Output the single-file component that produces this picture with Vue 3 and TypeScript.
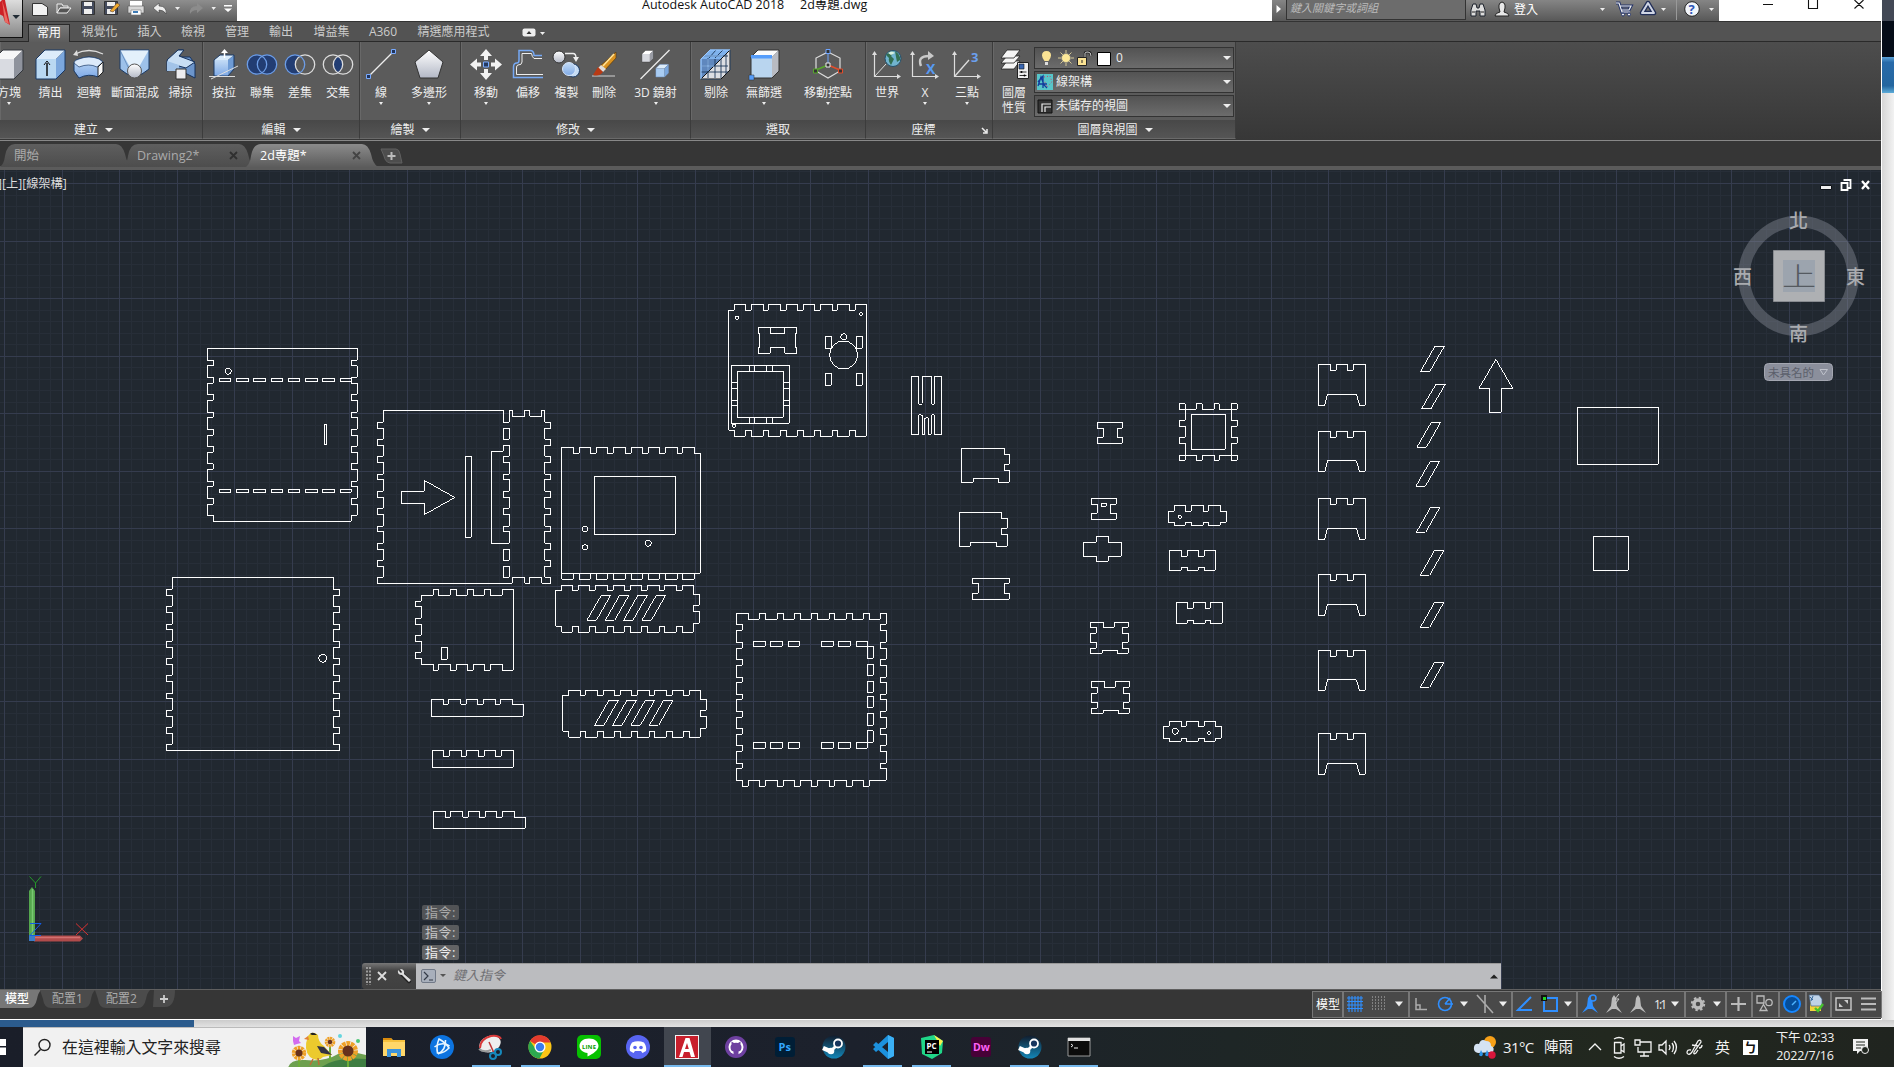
<script setup lang="ts">
interface Tool { label: string; icon: string; w: number; drop?: boolean }
interface Panel { title: string; w: number; pad: number; caret?: boolean; shift?: number; tools: Tool[] }
interface Sheet { x: number; y: number; d: string; circles?: number[][] }

/* ---------- icons ---------- */
const box = (a: string, b: string, c: string, s: string) =>
  `<path d="M1 10L10 1H30L21 10Z" fill="${a}"/><path d="M1 10H21V30H1Z" fill="${b}"/><path d="M21 10L30 1V21L21 30Z" fill="${c}"/><path d="M1 10L10 1H30V21L21 30H1Z" fill="none" stroke="${s}"/>`
const venn = (l: string, m: string, r: string, sl: string, sr: string) =>
  `<circle cx="11" cy="15.500" r="10" fill="${l}"/><circle cx="21" cy="15.500" r="10" fill="${r}"/><path d="M16 6.9A10 10 0 0 1 16 24.1A10 10 0 0 1 16 6.9Z" fill="${m}"/><circle cx="21" cy="15.500" r="9.7" fill="none" stroke="${sr}" stroke-width="1.3"/><circle cx="11" cy="15.500" r="9.7" fill="none" stroke="${sl}" stroke-width="1.3"/>`
const axes = '<path d="M3.500 4V27.500H28" fill="none" stroke="#ddd" stroke-width="1.2"/><path d="M1 6L3.500 2L6 6ZM26 25L30 27.500L26 30Z" fill="#ddd"/>'

const icons: Record<string, string> = {
  cube: box('#f7f7f8', '#d9dbe1', '#8f939d', '#33373d'),
  extrude: box('#dcecfa', '#b9d8f2', '#7ba7dd', '#1b3a66') + '<path d="M12 27V14" stroke="#111" stroke-width="1.5"/><path d="M9 16L12 12L15 16" fill="none" stroke="#111"/>',
  revolve: '<path d="M2 5Q16 -2 30 5" fill="none" stroke="#ddd" stroke-width="1.300"/><path d="M0 6L4 1L5 7Z" fill="#ddd"/><path d="M1 15Q1 11 6 10Q16 6 26 10L30 13V23L25 28Q16 24 6 29L1 22Z" fill="url(#gBlue)" stroke="#1b3a66"/><path d="M1 14Q1 11 6 10Q16 6 26 10L30 13L24 18Q16 14 6 18Z" fill="#dceafa" stroke="#1b3a66" stroke-width=".7"/><path d="M25 18L30 13V23L25 28Z" fill="#f6f6f6" stroke="#222"/>',
  loft: '<path d="M1 1H30V20L23 25H8L1 20Z" fill="#9dc1ea" stroke="#1b3a66"/><path d="M1.500 1.500H29.500L20 18H11Z" fill="#e3f0fb"/><path d="M1.500 2L10 20" stroke="#4e75a8" stroke-width=".6"/><circle cx="15.500" cy="22" r="7" fill="url(#gWhite)" stroke="#555"/>',
  sweep: '<path d="M13 1H18L14 8H25L30 15V29L20 24L12 20L2 22V12Z" fill="#6c95cb" stroke="#15315c"/><path d="M2 11L13 1H19L14 7L30 13L21 19L3 14Z" fill="#c8def4" stroke="#15315c"/><path d="M2 12L14 16V22H2Z" fill="#a2c3e8"/><path d="M11 20H21V30H11Z" fill="#ececef" stroke="#333"/>',
  press: '<path d="M6 11L12 6H26L20 11Z" fill="#d9ebfb"/><path d="M6 11H20V27H6Z" fill="url(#gBlue)"/><path d="M20 11L26 6V20L20 27Z" fill="#6e9bd5"/><path d="M6 11L12 6H26V20L20 27H6Z" fill="none" stroke="#1b3a66"/><path d="M1 27.500H27M3 30L30 17" stroke="#ddd" fill="none"/><path d="M16.500 9V3" stroke="#fff" stroke-width="1.500"/><path d="M13 4L16.500 0L20 4Z" fill="#fff"/>',
  union: venn('#223d73', '#223d73', '#223d73', '#6d9de6', '#6d9de6'),
  subtract: venn('#223d73', '#5b5b5b', '#5b5b5b', '#6d9de6', '#ddd'),
  intersect: venn('#5b5b5b', '#223d73', '#5b5b5b', '#ddd', '#ddd'),
  line: '<path d="M4 27L27 4" stroke="#eee" stroke-width="1.300"/><g fill="#20335a" stroke="#78aaff"><path d="M1.500 25.500h4v4h-4zM26.500 .5h4v4h-4z"/></g>',
  polygon: '<path d="M16 1L30 13L25 29H7L2 13Z" fill="url(#gWhite)" stroke="#333"/>',
  move: '<g fill="#f2f2f2"><path d="M16 0L22 7H18V11H14V7H10Z"/><path d="M16 31L22 24H18V20H14V24H10Z"/><path d="M0 15.500L7 9.500V13.500H11V17.500H7V21.500Z"/><path d="M32 15.500L25 9.500V13.500H21V17.500H25V21.500Z"/></g><path d="M13.500 13h5v5h-5z" fill="#243a62" stroke="#78aaff"/>',
  offset: '<path d="M30 6.500H22Q22 1.500 18 1.500H7V11Q7 14 5 14Q1.500 14 1.500 18V28.500H31" fill="none" stroke="#76a9f5" stroke-width="1.500"/><path d="M30 9.500H22Q20 8 19.500 4.500H10V13Q10 16 6 16Q4.500 16 4.500 19V25.500H31" fill="none" stroke="#eee"/>',
  copy: '<circle cx="8" cy="8" r="6" fill="url(#gWhite)" stroke="#333"/><path d="M14 4.500H22Q25 4.500 25 9" stroke="#eee" fill="none" stroke-width="1.400"/><path d="M22 8H28L25 13Z" fill="#eee"/><circle cx="22" cy="21.500" r="6.500" fill="#c5dcf5" stroke="#1b3a66"/><circle cx="18" cy="20" r="6.500" fill="url(#gBlue)" stroke="#d7e6fa"/>',
  erase: '<path d="M4 27H27" stroke="#aaa" stroke-width="1.500"/><path d="M28 3V9L16 22L11 18Z" fill="#d99221" stroke="#5f3b08" stroke-width=".7"/><path d="M26 5L15 17" stroke="#ffe399" stroke-width="1.500"/><path d="M13 16L18 20L15 23L10 19Z" fill="#ddd"/><path d="M10 18L15 23Q11 28 5 26Z" fill="#b93a14"/>',
  mirror: '<g transform="translate(-1.500 0)"><path d="M2 30L31 1" stroke="#eee" stroke-width="1.200"/><g transform="translate(3 1) scale(.4)">' + box('#fff', '#d7d9df', '#9a9da5', '#333') + '</g><g transform="translate(17 15) scale(.43)">' + box('#dcecfa', '#a9ccf2', '#7ba7dd', '#79a7e6') + '</g></g>',
  cull: box('#7fb2ed', '#5f87bd', '#3c5f92', '#7db2f2') + '<path d="M1 30L30 1V21L21 30Z" fill="#dcdee3" stroke="#111"/><path d="M8 9V29M15 10V29M21 10V29M1 17H28M1 23H28M4 7H28M16 1L9 9M23 1L15 9M26 5V25" fill="none" stroke="#1b3558" stroke-width=".9"/><path d="M1 10L10 1H30M1 10V30M8 10V22M1 17H14M4 7H23" fill="none" stroke="#9ac8ff"/>',
  filter: '<path d="M3 8L10 1H31L24 8Z" fill="#fbfbfb"/><path d="M3 8H24V29H3Z" fill="#b9d5ef"/><path d="M24 8L31 1V22L24 29Z" fill="#b8bbc2"/><path d="M3 8L10 1H31V22L24 29H3Z" fill="none" stroke="#333"/><path d="M3 6H24V9.500H3Z" fill="#559dfb"/><path d="M1 26h5v5H1z" fill="#559dfb" stroke="#333" stroke-width=".5"/>',
  gizmo: '<path d="M16 3L28 9V22L16 29L4 22V9Z" fill="none" stroke="#ddd" stroke-width="1.200"/><path d="M16 15V3" stroke="#6fa5ff"/><path d="M16 16L4 21" stroke="#56a72a" stroke-width="1.500"/><path d="M16 16L28 21" stroke="#e44c2a" stroke-width="1.500"/><g fill="#333"><path stroke="#6fa5ff" d="M14 .5h4v4h-4z"/><path stroke="#eee" d="M14 14h4v4h-4z"/><path stroke="#56a72a" d="M1.500 20h4v4h-4z"/><path stroke="#e44c2a" d="M26.500 20h4v4h-4z"/></g>',
  world: axes + '<path d="M4 27L15 15" stroke="#ddd"/><circle cx="22" cy="9.500" r="8" fill="#71b4cf" stroke="#264f68"/><path d="M15 6Q19 1 23 3L20 7L23 10L20 16Q17 12 18 9ZM24 2Q30 6 29 11L26 13L25 8Z" fill="#326f52"/><path d="M17 4Q21 1 24 4L20 6Z" fill="#d8f1df"/>',
  rotx: axes + '<path d="M12 17Q8 7 20 7" fill="none" stroke="#c9c9c9" stroke-width="2.500"/><path d="M19 2L25 7L19 11Z" fill="#c9c9c9"/><text x="17" y="25" font-size="14" font-weight="bold" fill="#579af3">X</text>',
  threept: axes + '<path d="M4 27L18 11" stroke="#ddd" stroke-width="1.300"/><text x="20" y="13" font-size="13" font-weight="bold" fill="#6ba0ee">3</text>',
  layers: '<g transform="translate(1 0)"><g fill="#f5f5f5" stroke="#222" stroke-width=".8"><path d="M2 20L8 12H21L15 20Z"/><path d="M2 14L8 7H21L15 14Z"/><path d="M2 9L8 1H21L15 9Z"/></g><path d="M18.500 13.500H29.500V29.500H18.500Z" fill="#eee" stroke="#222"/><path d="M20 15H25V20H20Z" fill="#3866b2" stroke="#111" stroke-width=".6"/><path d="M20.500 23H27.500M20.500 26.500H27.500" stroke="#333"/><circle cx="22.500" cy="23" r="1" /><circle cx="25.500" cy="26.500" r="1"/></g>',
}

const panels: Panel[] = [
  { title: '建立', w: 203, pad: 0, caret: true, shift: -15, tools: [
    { label: '方塊', icon: 'cube', w: 42, drop: true }, { label: '擠出', icon: 'extrude', w: 41 }, { label: '迴轉', icon: 'revolve', w: 36 },
    { label: '斷面混成', icon: 'loft', w: 56 }, { label: '掃掠', icon: 'sweep', w: 35 }] },
  { title: '編輯', w: 157, pad: 2, caret: true, tools: [
    { label: '按拉', icon: 'press', w: 38 }, { label: '聯集', icon: 'union', w: 38 }, { label: '差集', icon: 'subtract', w: 38 }, { label: '交集', icon: 'intersect', w: 38 }] },
  { title: '繪製', w: 101, pad: 2, caret: true, tools: [
    { label: '線', icon: 'line', w: 38, drop: true }, { label: '多邊形', icon: 'polygon', w: 58, drop: true }] },
  { title: '修改', w: 230, pad: 5, caret: true, tools: [
    { label: '移動', icon: 'move', w: 40, drop: true }, { label: '偏移', icon: 'offset', w: 44 }, { label: '複製', icon: 'copy', w: 33 },
    { label: '刪除', icon: 'erase', w: 42 }, { label: '3D 鏡射', icon: 'mirror', w: 61, drop: true }] },
  { title: '選取', w: 175, pad: 5, tools: [
    { label: '剔除', icon: 'cull', w: 40 }, { label: '無篩選', icon: 'filter', w: 56, drop: true }, { label: '移動控點', icon: 'gizmo', w: 72, drop: true }] },
  { title: '座標', w: 127, pad: 2, shift: -11, tools: [
    { label: '世界', icon: 'world', w: 38 }, { label: 'X', icon: 'rotx', w: 38, drop: true }, { label: '三點', icon: 'threept', w: 46, drop: true }] },
]

const menuTabs = [
  { t: '常用', w: 42 }, { t: '視覺化', w: 59 }, { t: '插入', w: 41 }, { t: '檢視', w: 46 }, { t: '管理', w: 42 },
  { t: '輸出', w: 46 }, { t: '增益集', w: 55 }, { t: 'A360', w: 48 }, { t: '精選應用程式', w: 93 },
]
const docTabs = [
  { t: '開始', close: false, on: false }, { t: 'Drawing2*', close: true, on: false }, { t: '2d専題*', close: true, on: true },
]

/* ---------- model space: three drawing units per pixel ---------- */
const v = (ys: number[], a: number, b: number) => ys.map((y, i) => `V${y}H${i % 2 ? b : a}`).join('')
const h = (xs: number[], a: number, b: number) => xs.map((x, i) => `H${x}V${i % 2 ? b : a}`).join('')
const rev = (n: number[]) => [...n].reverse()
const rect = (x1: number, y1: number, x2: number, y2: number) => `M${x1} ${y1}H${x2}V${y2}H${x1}Z`
const rowOf = (xs: number[][], y1: number, y2: number) => xs.map(([a, b]) => rect(a, y1, b, y2)).join('')
const slash = (x: number, y: number, hgt = 75) => `M${x} ${y}h28l-43 ${hgt}h-28Z`

const yA = [91, 107, 142, 160, 193, 211, 247, 262, 298, 316, 349, 367, 401, 418, 454, 469, 505, 523, 556]
const slotsA = [[208, 242], [259, 296], [310, 347], [364, 398], [415, 449], [466, 503], [517, 554], [571, 604]]
const yB = [277, 295, 328, 346, 379, 397, 433, 448, 484, 502, 535, 553, 589, 604, 640, 658, 691, 709, 742]
const yC = [88, 106, 139, 157, 193, 208, 244, 262, 295, 313, 346, 364, 401, 415, 451, 469, 502, 520, 553]
const xD = [865, 901, 919, 952, 970, 1003, 1021, 1057]
const xH = [100, 118, 151, 169, 202, 220, 256, 274, 307, 325, 358, 376, 412, 427, 463]
const xI = [97, 115, 148, 166, 202, 220, 253, 271, 304, 322, 358, 373, 409, 427]
const xJ = [121, 136, 172, 190, 223, 241, 274, 292, 328, 343, 379, 397, 430, 448]
const xK = [625, 658, 676, 712, 730, 763, 781, 814, 832, 868, 883, 919, 937, 970, 988, 1021]
const yK = [583, 601, 637, 655, 688, 706, 742, 757, 793, 808, 844, 862, 895, 913, 946, 964, 1000, 1015]
const slotsK = [[640, 676], [691, 727], [745, 778], [844, 880], [895, 931], [949, 982]]
const xL = [136, 154, 190, 205, 241, 259, 292, 310, 343, 361, 397, 412, 448, 466]

const sheets: Sheet[] = [
  { x: 150, y: 330, circles: [[235, 124, 9]], d:
    `M172 55H622${v(yA, 604, 622)}V574H190${v(rev(yA), 172, 190)}Z${rowOf(slotsA, 146, 154)}${rowOf(slotsA, 478, 487)}${rect(523, 283, 529, 344)}` +
    `M700 241H1060V277H1078V241H1087V259H1124V241H1139V259H1175V241H1184${v(yB, 1202, 1184)}V760H1175V742H1139V760H1124V742H1087V760H682${v(rev(yB), 700, 682)}Z` +
    rect(1060, 295, 1078, 328) + rect(1060, 658, 1078, 691) + rect(1060, 709, 1078, 742) +
    `M1060 364V346H1078${v(yB.slice(4, 14), 1060, 1078)}V640H1024V364H1060${rect(946, 379, 964, 622)}M754 484H823V451L914 502L823 553V520H754Z` },
  { x: 150, y: 560, circles: [[518, 295, 12]], d:
    `M67 52H550${v(yC, 569, 550)}V571H49${v(rev(yC), 67, 49)}Z` +
    `M850 106V88${h(xD, 106, 88)}H1090V331${h(rev(xD), 313, 331)}H850V313H814${v([295, 277, 244, 226, 193, 175, 139, 124], 796, 814)}V106H850${rect(874, 262, 892, 298)}` +
    `M844 418${h([880, 895, 932, 949, 982, 1000, 1036, 1051], 433, 418)}H1087V433H1120V469H844Z` +
    `M847 571${h([880, 898, 934, 949, 985, 1003, 1036, 1054], 589, 571)}H1090V622H847Z` +
    `M850 754${h([886, 901, 938, 955, 988, 1006, 1039, 1057], 772, 754)}H1093V772H1126V805H850Z` },
  { x: 540, y: 430, circles: [[135, 297, 8], [135, 352, 8], [325, 340, 9]], d:
    `M65 52${h(xH, 70, 52)}H481V430H65Z${rowOf([[65, 100], [118, 151], [169, 202], [220, 256], [274, 307], [325, 358], [376, 412], [427, 463]], 430, 448)}${rect(163, 139, 406, 313)}` +
    `M65 466${h(xI, 481, 466)}H460V493H478V526H460V544H478V580H460V607${h(rev(xI), 589, 607)}H65V589H47V481H65Z${[183, 238, 293, 348].map(x => slash(x, 496)).join('')}` +
    `M86 781${h(xJ, 796, 781)}H481V808H499V841H481V859H499V895H481V922${h(rev(xJ), 904, 922)}H86V904H67V796H86Z${[206, 260, 315, 370].map(x => slash(x, 811)).join('')}` +
    `M589 550${h(xK, 568, 550)}H1039${v(yK, 1021, 1039)}V1051${h(rev(xK.slice(0, 15)), 1069, 1051)}H607V1051H589${v(rev(yK), 607, 589)}Z` +
    rowOf(slotsK, 634, 649) + rowOf(slotsK, 937, 955) +
    [[649, 685], [703, 736], [754, 787], [799, 832], [850, 886], [902, 937]].map(([a, b]) => rect(982, a, 1000, b)).join('') },
  { x: 700, y: 290, circles: [[111, 83, 5], [483, 72, 5], [102, 407, 5], [431, 140, 9], [431, 195, 42]], d:
    `M103 43${h(xL, 61, 43)}H499V439${h(rev(xL), 421, 439)}H103V421H85V61H103Z` +
    'M175 112H290V130H286V172H290V190H254V172H211V190H175V172H179V130H175ZM211 112V130H254V112' +
    rect(94, 226, 268, 400) + rect(112, 244, 250, 382) + [148, 163, 199, 217].map(x => `M${x} 226V244M${x} 382V400`).join('') +
    [277, 295, 331, 346].map(y => `M94 ${y}H112M250 ${y}H268`).join('') +
    rowOf([[376, 394], [469, 487]], 139, 175) + rowOf([[376, 394], [469, 487]], 250, 286) +
    'M634 259H656V340L660 344L667 340V259H694V340L699 344L703 340V259H725V433H703V376L699 373L694 376V433H685V385L680 382L674 385V433H667V376L660 373L656 376V433H634Z' +
    'M784 475H913V493H928V523H913V541H928V577H895V565H820V577H784ZM778 667H904V685H922V715H904V733H922V769H889V757H811V769H778ZM817 865H928V880H913V910H928V928H817V910H835V880H817Z' },
  { x: 1070, y: 390, circles: [[329, 380, 5], [316, 1024, 9], [417, 1029, 5]], d:
    'M82 97H157V115H142V142H157V160H82V142H100V115H82ZM64 325H139V343H121V370H139V388H64V370H82V343H64ZM94 340H109V349H94Z' +
    'M79 439H115V457H154V499H115V514H79V499H40V457H79Z' +
    'M61 697H100V712H133V697H175V712H157V730H175V757H157V775H175V790H142V781H97V790H61V775H79V757H61V730H79V712H61Z' +
    'M64 874H103V892H136V874H178V892H160V910H178V937H160V955H178V970H145V961H100V970H64V955H82V937H64V910H82V892H64Z' +
    'M346 58H379V40H397V58H433V40H448V58H484V91H502V109H484V142H502V160H484V196H448V211H433V196H397V211H379V196H346V160H328V142H346V109H328V91H346Z' +
    rect(328, 40, 346, 58) + rect(484, 40, 502, 58) + rect(328, 196, 346, 211) + rect(484, 196, 502, 211) + rect(364, 73, 466, 178) +
    'M313 346H346V364H364V346H400V364H415V346H451V364H469V397H451V406H415V397H400V406H364V397H346V406H313V397H295V364H313Z' +
    'M298 481H334V499H352V481H385V499H403V481H436V541H403V532H385V541H352V532H334V541H298Z' +
    'M319 637H352V655H370V637H406V655H421V637H457V700H421V691H406V700H370V691H352V700H319Z' +
    'M298 994H334V1009H349V994H385V1009H403V994H436V1009H454V1045H436V1054H403V1045H385V1054H349V1045H334V1054H298V1045H280V1009H298Z' },
  { x: 1300, y: 330, d:
    [[103, 122], [304, 120], [505, 122], [733, 122], [961, 120], [1210, 122]].map(([y, k]) => `M55 ${y}h36v18h18v-18h33v18h18v-18h36v${k}h-18l-9 -32h-87l-8 32h-19Z`).join('') +
    [[404, 49], [407, 163, 73], [393, 277], [390, 394], [391, 532], [403, 661], [403, 817], [403, 997]].map(([x, y, k]) => slash(x, y, k)).join('') +
    'M587 88L638 175H604V247H568V175H536Z' + rect(832, 232, 1075, 403) + rect(880, 619, 985, 721) },
]

const pitch = 57.58
const gridLines = (start: number, min: number, max: number) => {
  const major: number[] = [], minor: number[] = []
  for (let k = -5; start + (k * pitch) / 5 < max; k++) {
    const p = Math.round(start + (k * pitch) / 5)
    if (p >= min) (k % 5 === 0 ? major : minor).push(p)
  }
  return { major, minor }
}
const gx = gridLines(4, 0, 1881)
const gy = gridLines(183, 170, 989)
const gridPath = (xs: number[], ys: number[]) => xs.map(x => `M${x}.5 170V989`).join('') + ys.map(y => `M0 ${y}.5H1881`).join('')
const minorGrid = gridPath(gx.minor, gy.minor)
const majorGrid = gridPath(gx.major, gy.major)

/* ---------- status bar ---------- */
const man = (x: number, c: string) => `<path d="M${x} 4L${x + 2} 7L${x + 3} 15L${x + 8} 22L${x + 2} 18H${x - 2}L${x - 8} 22L${x - 3} 15L${x - 2} 7Z" fill="${c}"/>`
const car = (x: number) => `<path d="M${x - 4} 10.500h8l-4 5z" fill="#eee"/>`
const status: { w: number; g: string }[] = [
  { w: 31, g: '<text x="4" y="17.500" font-size="12" fill="#fff">模型</text>' },
  { w: 66, g: '<path d="M6 5V21M9 5V21M12 5V21M15 5V21M18 5V21M4 7H20M4 10.500H20M4 14H20M4 17.500H20" stroke="#2f8fff" stroke-width="1.100"/><path d="M29 6H43M29 9H43M29 12H43M29 15H43M29 18H43" stroke="#bbb" stroke-dasharray="1 2"/>' + car(56) },
  { w: 103, g: '<path d="M7 7V18.500H18M7 14H11V18" fill="none" stroke="#aaa" stroke-width="1.500"/><circle cx="36" cy="13" r="6.500" fill="none" stroke="#2f8fff" stroke-width="1.600"/><path d="M36 13H44M36 13L41 7" stroke="#2f8fff" stroke-width="1.500"/>' + car(55) + '<path d="M68 4L84 22M76 4V22" stroke="#aaa" stroke-width="1.600"/>' + car(94) },
  { w: 65, g: '<path d="M19 6L6 19H20" fill="none" stroke="#2f8fff" stroke-width="2"/><path d="M32 7H45V20H32Z" fill="none" stroke="#2f8fff" stroke-width="2"/><path d="M29 4h6v6h-6z" fill="#111"/><path d="M31 6h3v3h-3z" fill="#23d423"/>' + car(56) },
  { w: 108, g: man(13, '#2f8fff') + '<circle cx="16" cy="7" r="3" fill="#4a4a4a" stroke="#2f8fff" stroke-width="1.500"/>' + man(37, '#bbb') + '<path d="M42 3L38 8H42L38 13" fill="none" stroke="#ccc"/>' + man(61, '#bbb') + '<text x="77" y="17.500" font-size="12" fill="#eee" textLength="13">1:1</text>' + car(98) },
  { w: 41, g: '<circle cx="13" cy="13" r="4" fill="none" stroke="#bbb" stroke-width="3.500"/><circle cx="13" cy="13" r="6.200" fill="none" stroke="#bbb" stroke-width="2" stroke-dasharray="2.400 2.470"/>' + car(32) },
  { w: 26, g: '<path d="M12.500 6V20M5 13H20" stroke="#bbb" stroke-width="2.200"/>' },
  { w: 27, g: '<path d="M5 5h7v7H5zM8 19.500h7l-3.500-6z" fill="none" stroke="#bbb" stroke-width="1.300"/><circle cx="17" cy="11.500" r="3.200" fill="none" stroke="#bbb" stroke-width="1.300"/>' },
  { w: 27, g: '<circle cx="13" cy="13" r="8" fill="#064e9a" stroke="#1687ff" stroke-width="2"/><path d="M13 14L17 10" stroke="#4db4ff" stroke-width="1.500"/>' },
  { w: 25, g: '<path d="M4 9H15V20H4Z" fill="#f2d33b"/><path d="M3 4H13L16 8V15H5Z" fill="#bfd3e8" stroke="#486587" stroke-width=".7"/><path d="M4 6L7 9M7 5L5 10" stroke="#37699c"/><path d="M9 17L12 20L17 13" fill="none" stroke="#47c22c" stroke-width="2.400"/>' },
  { w: 51, g: '<path d="M5 7H20V19H5Z" fill="none" stroke="#ccc" stroke-width="1.400"/><path d="M8 16V12L12 16ZM17 9V13L13 9Z" fill="#ccc"/><path d="M30 7.500H45M30 13H45M30 18.500H45" stroke="#bbb" stroke-width="2.200"/>' },
]

/* ---------- taskbar ---------- */
const steam = '<circle cx="14" cy="14" r="11.500" fill="url(#gSteam)"/><path d="M3 15L11 18.500" stroke="#fff" stroke-width="4.500"/><circle cx="11" cy="18" r="3.300" fill="#fff"/><path d="M11 18L18 11" stroke="#fff" stroke-width="3"/><circle cx="18" cy="10.500" r="4" fill="#16365e" stroke="#fff" stroke-width="1.800"/>'
const apps: { g: string; run?: boolean; on?: boolean }[] = [
  { g: '<path d="M3 5H11L13 7H25V23H3Z" fill="#f6c13d"/><path d="M3 5H11L12 7H3Z" fill="#d98a0c"/><path d="M3 9H25V23H3Z" fill="#ffd76a"/><path d="M7 24V16H21V24H17V20H11V24Z" fill="#3c94dc"/>' },
  { g: '<circle cx="14" cy="14" r="12" fill="#0d74e0"/><g fill="none" stroke="#e8f6ff" stroke-width="1.600"><path d="M9.500 20Q8 13 11 6Q17 9 21 15Q15 21 9.500 20Z"/><path d="M6.500 14Q14 8 21.500 13"/><path d="M10 21Q18 17 17.500 7"/></g>' },
  { g: '<ellipse cx="13" cy="11" rx="11" ry="8" fill="#eee" transform="rotate(-20 13 11)"/><path d="M3 15Q3 6 14 3Q22 2 24 6" fill="none" stroke="#d83a3a" stroke-width="2"/><path d="M2 16Q7 20 14 17" stroke="#999" fill="none" stroke-width="2"/><path d="M12 9L17 20" stroke="#b33" stroke-width="1.500"/><circle cx="16" cy="23" r="3" fill="none" stroke="#1688bb" stroke-width="2"/><circle cx="21" cy="19" r="3" fill="none" stroke="#1688bb" stroke-width="2"/>', run: true },
  { g: '<circle cx="14" cy="14" r="11.500" fill="#fbc515"/><path d="M14 14L4 8A11.500 11.500 0 0 1 24.600 9.500H14Z" fill="#e33b2e"/><path d="M4 8A11.500 11.500 0 0 0 13.500 25.500L18 17L9 15Z" fill="#2da94f"/><circle cx="14" cy="14" r="5.500" fill="#fff"/><circle cx="14" cy="14" r="4.200" fill="#3b7ded"/>', run: true },
  { g: '<rect x="2" y="2" width="24" height="24" rx="5" fill="#06c000"/><path d="M14 5.500C8 5.500 4.500 9 4.500 13C4.500 17 8 19.500 12.500 20V23.500C18 21 23.500 17 23.500 13C23.500 9 20 5.500 14 5.500Z" fill="#fff"/><text x="7" y="15.500" font-size="6" font-weight="bold" fill="#06a000" textLength="14">LINE</text>' },
  { g: '<circle cx="14" cy="14" r="12" fill="#5865f2"/><path d="M8 9.500Q14 7 20 9.500Q23 14 22 18L18.500 20L17 18H11L9.500 20L6 18Q5 14 8 9.500Z" fill="#fff"/><circle cx="11" cy="14.500" r="1.800" fill="#5865f2"/><circle cx="17" cy="14.500" r="1.800" fill="#5865f2"/>' },
  { g: '<rect x="2" y="2" width="24" height="24" fill="#f3f3f3"/><path d="M3 3H25V25H3Z" fill="#c81f2c"/><path d="M6 24L12.500 5H16.500L22 24H18L16.500 19H11L9.500 24ZM12 16H15.800L14 10Z" fill="#fff"/>', run: true, on: true },
  { g: '<circle cx="14" cy="14" r="11" fill="#6e40a0"/><circle cx="14" cy="14" r="7.500" fill="#fff"/><path d="M11.500 22V18.500Q8.500 18 8.500 14Q8.500 12.500 9.500 11.500V8.500L12 10Q14 9.500 16 10L18.500 8.500V11.500Q19.500 12.500 19.500 14Q19.500 18 16.500 18.500V22Z" fill="#6e40a0"/>' },
  { g: '<rect x="4" y="4" width="20" height="20" rx="3" fill="#001e36"/><text x="7.500" y="18" font-size="11" font-weight="bold" fill="#31a8ff">Ps</text>' },
  { g: steam },
  { g: '<path d="M19 2L25 5V23L19 26L4 12L7 9L19 19V9L7 19L4 16Z" fill="#1c91dd"/><path d="M19 2L25 5V23L19 26Z" fill="#3bb0f5"/>', run: true },
  { g: '<path d="M3 5L16 2L25 8L24 20L14 26L4 21Z" fill="#20d789"/><path d="M16 2L25 8L22 13Z" fill="#f9f150"/><path d="M7 7H21V21H7Z" fill="#000"/><text x="8.500" y="15.500" font-size="8" font-weight="bold" fill="#fff">PC</text><path d="M9 19H14" stroke="#fff"/>', run: true },
  { g: '<rect x="4" y="4" width="20" height="20" rx="3" fill="#470137"/><text x="6" y="18" font-size="10.500" font-weight="bold" fill="#ff61f6">Dw</text>' },
  { g: steam, run: true },
  { g: '<path d="M3 5H25V23H3Z" fill="#0b0b0b" stroke="#999"/><path d="M3 5H25V8H3Z" fill="#e0e0e0"/><path d="M6 11L8 12.500L6 14M9 15H13" stroke="#eee" fill="none"/>', run: true },
]
</script>

<template>
  <div class="desk">
    <svg class="defs" width="0" height="0">
      <defs>
        <linearGradient id="gBlue" x1="0" y1="0" x2="0" y2="1"><stop offset="0" stop-color="#c4dcf6" /><stop offset="1" stop-color="#7ea9e6" /></linearGradient>
        <linearGradient id="gWhite" x1="0" y1="0" x2="0" y2="1"><stop offset="0" stop-color="#fff" /><stop offset="1" stop-color="#b3b8c6" /></linearGradient>
        <linearGradient id="gSteam" x1="0" y1="0" x2="0" y2="1"><stop offset="0" stop-color="#111d2e" /><stop offset="1" stop-color="#1387b8" /></linearGradient>
        <linearGradient id="gTab" x1="0" y1="0" x2="0" y2="1"><stop offset="0" stop-color="#5e5e5e" /><stop offset="1" stop-color="#4d4d4d" /></linearGradient>
        <linearGradient id="gTabOn" x1="0" y1="0" x2="0" y2="1"><stop offset="0" stop-color="#8b8b8b" /><stop offset="1" stop-color="#5c5c5c" /></linearGradient>
      </defs>
    </svg>

    <div class="upper">
      <div class="window">
        <header class="titlebar">
          <div class="qat">
            <svg width="214" height="21" viewBox="23 0 214 21">
              <path d="M32.500 3.500H42L47.500 7V15.500H32.500Z" fill="#f2f2f2" stroke="#333" />
              <path d="M57 4H62L63 6H68V8H60L57 13Z" fill="#777" stroke="#eee" /><path d="M57 13L60 8H71L67 13Z" fill="#555" stroke="#eee" />
              <path d="M81.500 1.500H94.500V14.500H81.500Z" fill="#444b5d" stroke="#333" /><path d="M84 2H92V6H84ZM84 9H92V14H84Z" fill="#eee" />
              <path d="M104.500 1.500H117.500V14.500H104.500Z" fill="#444b5d" stroke="#333" /><path d="M107 2H115V6H107ZM107 9H115V14H107Z" fill="#eee" /><path d="M110 11L117 3L120 5L113 12Z" fill="#f0aa2e" stroke="#643" stroke-width=".6" />
              <path d="M130 1H142V6H130Z" fill="#fff" /><path d="M128 6H144V13H128Z" fill="#d8d8d8" stroke="#555" stroke-width=".6" /><path d="M131 10H141V15H131Z" fill="#fff" stroke="#777" stroke-width=".6" /><path d="M133 11H138V13H133Z" fill="#3e7bb5" />
              <path d="M153 8L159 3V6Q167 6 166 14Q164 10 159 10V13Z" fill="#eee" stroke="#444" stroke-width=".6" />
              <path d="M175 7H180L177.500 10ZM211.500 7H216L213.500 10Z" fill="#eee" />
              <path d="M203 8L197 3V6Q189 6 190 14Q192 10 197 10V13Z" fill="#8c8c8c" />
              <path d="M224 5H232V6.500H224ZM224 8.500H232L228 12Z" fill="#fff" />
            </svg>
          </div>
          <div class="caption"><span>Autodesk AutoCAD 2018</span><span>2d専題.dwg</span></div>
          <div class="info">
            <svg width="14" height="21"><path d="M4.500 5L9 9L4.500 13Z" fill="#fff" /></svg>
            <div class="ask">鍵入關鍵字或詞組</div>
            <svg width="48" height="21" viewBox="1466 0 48 21">
              <path d="M1471 16V10L1473 4H1476L1477 8H1479L1480 4H1483L1485 10V16H1480V11H1476V16Z" fill="#ddd" stroke="#1d222c" /><path d="M1472 12H1475M1481 12H1484" stroke="#222" />
              <path d="M1495 16Q1495 13 1500 12Q1497 3 1502 2Q1507 3 1504 12Q1509 13 1509 16Z" fill="#e7e7e7" stroke="#222" />
            </svg>
            <span class="login">登入</span>
            <svg width="180" height="21" viewBox="1540 0 180 21">
              <path d="M1600 8h5l-2.500 3z" fill="#eee" />
              <path d="M1616 3H1619L1622 12H1630M1620 6H1631L1629 10H1621" fill="none" stroke="#24346a" stroke-width="3.200" /><path d="M1616 3H1619L1622 12H1630M1620 6H1631L1629 10H1621" fill="none" stroke="#eee" stroke-width="1.200" /><circle cx="1623" cy="14.500" r="1.500" fill="#eee" stroke="#24346a" /><circle cx="1629" cy="14.500" r="1.500" fill="#eee" stroke="#24346a" />
              <path d="M1648 3L1654 13H1642Z" fill="none" stroke="#222f58" stroke-width="4.500" stroke-linejoin="round" /><path d="M1648 3L1654 13H1642Z" fill="none" stroke="#cfd5e5" stroke-width="2" stroke-linejoin="round" />
              <path d="M1661 8h5l-2.500 3z" fill="#eee" /><path d="M1676.500 0V20" stroke="#999" />
              <circle cx="1692" cy="9" r="7.300" fill="#f2f5fa" stroke="#222" /><text x="1688.500" y="14" font-size="13" font-weight="bold" fill="#2c54b6">?</text>
              <path d="M1709 8h5l-2.500 3z" fill="#eee" />
            </svg>
          </div>
          <svg class="winbtns" width="162" height="21" viewBox="1719 0 162 21"><path d="M1763 4.500H1773M1808.500 -2V8.500H1817.500V-2M1854.500 0L1863.500 8.500M1863.500 0L1854.500 8.500" fill="none" stroke="#111" stroke-width="1.100" /></svg>
        </header>

        <div class="appmenu">
          <svg width="22" height="37"><path d="M-1 14V3L2 0H5L10 25L5 22L3 16Z" fill="#cc2027" /><path d="M2 0L9 24L5 22Z" fill="#e96a62" /><path d="M12.500 15H20L16 19Z" fill="#222c35" /></svg>
        </div>

        <nav class="menutabs">
          <span v-for="(m, i) in menuTabs" :key="m.t" :class="{ on: i === 0 }" :style="{ width: m.w + 'px' }">{{ m.t }}</span>
          <svg width="52" height="20"><rect x="22.500" y="6.500" width="13" height="8" rx="2" fill="#eee" /><path d="M26.500 12L29 9L31.500 12Z" fill="#333" /><path d="M40 10H45L42.500 13Z" fill="#eee" /></svg>
        </nav>

        <section class="ribbon">
          <div v-for="p in panels" :key="p.title" class="panel" :style="{ width: p.w + 'px' }">
            <div class="tools" :style="{ paddingLeft: p.pad + 'px' }">
              <div v-for="t in p.tools" :key="t.label" class="tool" :style="{ width: t.w + 'px' }">
                <svg width="32" height="32" viewBox="0 0 32 32" v-html="icons[t.icon]"></svg>
                <span class="lbl">{{ t.label }}</span>
                <i v-if="t.drop" class="tri"></i>
              </div>
            </div>
            <div class="ptitle"><span :style="{ marginLeft: (p.shift ?? 0) + 'px' }">{{ p.title }}</span><i v-if="p.caret" class="tri big"></i><svg v-if="p.title === '座標'" class="launch" width="8" height="8"><path d="M1 1L5 5M6 2V6H2" fill="none" stroke="#eee" stroke-width="1.500" /></svg></div>
          </div>
          <div class="panel layer">
            <div class="tools">
              <div class="tool two"><svg width="32" height="32" viewBox="0 0 32 32" v-html="icons.layers"></svg><span class="lbl">圖層<br>性質</span></div>
              <div class="combos">
                <div class="combo">
                  <svg width="80" height="20" viewBox="0 0 80 20">
                    <path d="M11.500 3Q16 3 16 7.500Q16 10 13.500 13H9.500Q7 10 7 7.500Q7 3 11.500 3Z" fill="#fbe394" /><path d="M10 14H13V17H10Z" fill="#ddd" />
                    <g stroke="#d4c795"><path d="M31 2V18M23 10H39M25.500 4.500L36.500 15.500M36.500 4.500L25.500 15.500" /></g><circle cx="31" cy="10" r="4.500" fill="#fde998" stroke="#777" stroke-width=".7" />
                    <path d="M42.500 9.500H51.500V17.500H42.500Z" fill="#fbe394" stroke="#222" /><path d="M50 9V5Q50 4 53 4Q56 4 56 8" fill="none" stroke="#222" stroke-width="2.500" /><path d="M50 9V5Q50 4 53 4Q56 4 56 8" fill="none" stroke="#ccc" /><path d="M47 12V15" stroke="#222" />
                    <path d="M62.500 4.500H75.500V17.500H62.500Z" fill="#fff" stroke="#000" />
                  </svg><span class="zero">0</span><i class="tri big"></i>
                </div>
                <div class="combo">
                  <svg width="21" height="20"><path d="M2 2H18V18H2Z" fill="#57c5c9" /><path d="M3 14L6 5L9 13L12 16M3 10L8 4L8 16M4 12H12" fill="none" stroke="#123b9b" stroke-width="1.300" /><path d="M9 5L15 4L17 10L12 15L9 8" fill="none" stroke="#c5436b" stroke-dasharray="1 2" /></svg><span>線架構</span><i class="tri big"></i>
                </div>
                <div class="combo">
                  <svg width="21" height="20"><path d="M3 4H17V17H3Z" fill="#333" stroke="#111" /><path d="M7 16V8H16M10 16V11H16" fill="none" stroke="#eee" stroke-width="1.200" /></svg><span>未儲存的視圖</span><i class="tri big"></i>
                </div>
              </div>
            </div>
            <div class="ptitle"><span class="ltitle">圖層與視圖</span><i class="tri big"></i></div>
          </div>
        </section>

        <nav class="doctabs">
          <div v-for="d in docTabs" :key="d.t" class="doctab" :class="{ on: d.on }">
            <svg class="shape" width="132" height="23"><path d="M0 23Q4 20 5 12Q7 0 15 0H116Q122 0 125 10Q127 20 132 23Z" :fill="d.on ? 'url(#gTabOn)' : 'url(#gTab)'" /></svg>
            <span>{{ d.t }}</span>
            <svg v-if="d.close" class="x" width="9" height="9"><path d="M1 1L8 8M8 1L1 8" :stroke="d.on ? '#444' : '#303030'" stroke-width="1.800" /></svg>
          </div>
          <svg class="plus" width="24" height="16"><path d="M1 1H16Q19 1 20 6L22 15H10Q5 14 4 8Z" fill="#4d4d4d" stroke="#606060" /><path d="M11.500 4V12M7.500 8H15.500" stroke="#bbb" stroke-width="2" /></svg>
        </nav>

        <main class="canvas">
          <svg class="model" width="1881" height="820" viewBox="0 170 1881 820">
            <g fill="none" shape-rendering="crispEdges">
              <path :d="minorGrid" stroke="#272e38" />
              <path :d="majorGrid" stroke="#353c4e" />
              <g v-for="(s, i) in sheets" :key="i" :transform="`translate(${s.x} ${s.y}) scale(.333333)`" stroke="#fff" stroke-width="3">
                <path :d="s.d" transform="translate(.5 .5)" />
                <circle v-for="(c, k) in s.circles" :key="k" :cx="c[0]" :cy="c[1]" :r="c[2]" />
              </g>
            </g>
            <g fill="none">
              <path d="M29 937V891L32 887L35 891V937Z" fill="#55a74e" /><path d="M32.500 889V936" stroke="#7ac873" stroke-width="1.500" />
              <path d="M34 935.500H80L83 938.500L80 941.500H34Z" fill="#b04b4b" /><path d="M35 937.500H80" stroke="#d27070" stroke-width="1.500" />
              <path d="M29 935h6v6h-6z" fill="#3b7cc8" />
              <path d="M29.500 876.500L35.500 883L41 876.500M35.500 883V888" stroke="#25982a" /><path d="M76 923.500L88 935M88 923.500L76 935" stroke="#d83232" /><path d="M30 923.500H41L30 935.500H41" stroke="#145ee8" />
              <circle cx="1798.500" cy="276" r="54.500" stroke="#8b909b" stroke-opacity=".42" stroke-width="11.500" />
              <path d="M1773.500 250.500H1824.500V301.500H1773.500Z" fill="#aeb0b3" stroke="#888b90" /><path d="M1783 260H1815V292H1783Z" fill="#9ca4ae" />
            </g>
            <g class="compass" text-anchor="middle">
              <text x="1798.500" y="227.500">北</text><text x="1798.500" y="341">南</text><text x="1742.500" y="284">西</text><text x="1855.500" y="284">東</text>
              <text class="top" transform="translate(1799 285.500) scale(1.18 .92)">上</text>
            </g>
            <rect x="1764.500" y="363.500" width="68" height="17" rx="4" fill="#8b8f9c" stroke="#a4a7b1" />
            <text x="1768" y="376.500" font-size="11.500" fill="#5b5f6b">未具名的</text><path d="M1820 369.500H1827.500L1823.500 375Z" fill="none" stroke="#c0c3cc" />
            <g stroke="#0e1218" stroke-width="1"><path d="M1820.500 185.500H1831.500V189.500H1820.500Z" fill="#eee" /><path d="M1843.500 180H1850.500V188H1848M1841.500 183H1847.500V190H1841.500Z" fill="none" stroke="#fff" stroke-width="1.800" /><path d="M1862 181L1869 189M1869 181L1862 189" stroke="#fff" stroke-width="2.300" /></g>
          </svg>
          <div class="vplabel">][上][線架構]</div>
          <div class="cmd">
            <div class="hist"><span>指令:</span><span>指令:</span><span>指令:</span></div>
            <div class="bar">
              <svg width="54" height="26"><path d="M5 4V22M8 4V22" stroke="#999" stroke-width="2" stroke-dasharray="2 1.500" /><path d="M16 9L24 17M24 9L16 17" stroke="#ddd" stroke-width="1.800" /><path d="M39 10L47 18" stroke="#222" stroke-width="4.500" stroke-linecap="round" /><path d="M36 7Q35 12 40 12L47 19L49 17L42 11Q43 6 38 6L40 9L39 10Z" fill="#ddd" /></svg>
              <div class="entry">
                <svg width="37" height="26"><rect x="5.500" y="5.500" width="14" height="13" rx="1.500" fill="#a8afbb" stroke="#717987" /><path d="M8 8L12 12L8 16M13 16H17" fill="none" stroke="#333b47" stroke-width="1.200" /><path d="M24 10H30L27 13Z" fill="#555" /></svg>
                <span>鍵入指令</span>
                <svg class="up" width="12" height="26"><path d="M1 14.500H9L5 10.500Z" fill="#222" /></svg>
              </div>
            </div>
          </div>
        </main>

        <footer class="status">
          <div class="layouts">
            <svg width="180" height="20"><path d="M0 0H41Q38 3 37 9Q35 18 29 18H0Z" fill="#777" /><path d="M40 0H95Q92 3 91 9Q90 18 83 18H51Q44 18 43 9Z" fill="#4b4b4b" /><path d="M95 0H150Q147 3 146 9Q144 18 138 18H106Q99 18 98 9Z" fill="#4b4b4b" /><path d="M154 0H175Q175 17 165 17H153Z" fill="#4b4b4b" /><path d="M164 5V13M160 9H168" stroke="#ccc" stroke-width="1.800" /></svg>
            <div class="names"><b>模型</b><span>配置1</span><span>配置2</span></div>
          </div>
          <div class="groups">
            <div v-for="(s, i) in status" :key="i" class="grp" :style="{ width: s.w + 'px' }"><svg :width="s.w" height="26" :viewBox="`0 0 ${s.w} 26`" v-html="s.g"></svg></div>
          </div>
        </footer>
      </div>
      <aside class="behind"><div class="b1"></div><div class="b2"></div><div class="b3"></div><div class="b4"></div></aside>
    </div>
    <div class="strip"><div></div></div>

    <footer class="taskbar">
      <svg class="start" width="23" height="40"><path d="M0 12H6V19H0ZM0 20.500H6V28H0Z" fill="#fff" /></svg>
      <div class="search">
        <svg width="39" height="40"><circle cx="21.500" cy="17" r="5.500" fill="none" stroke="#222" stroke-width="1.400" /><path d="M17.500 21.500L11.500 27.500" stroke="#222" stroke-width="1.500" /></svg>
        <span>在這裡輸入文字來搜尋</span>
        <svg class="bird" width="78" height="40" viewBox="288 1027 78 40">
          <path d="M288 1067Q290 1058 305 1059Q325 1061 338 1053Q350 1049 366 1054V1067Z" fill="#6da04f" /><path d="M320 1067Q335 1055 366 1058V1067Z" fill="#3f7e42" />
          <path d="M299 1053V1066M330 1045V1060M348 1054V1067" stroke="#6cad39" stroke-width="2" />
          <g fill="none" stroke="#efa128"><circle cx="299" cy="1052" r="5" stroke-width="4.500" stroke-dasharray="2.500 .6" /><circle cx="330" cy="1041" r="3.800" stroke-width="3" stroke-dasharray="2 .5" /><circle cx="348" cy="1050" r="7.500" stroke-width="5" stroke-dasharray="3.500 .7" /></g>
          <g fill="#66311d"><circle cx="299" cy="1052" r="3.500" /><circle cx="330" cy="1041" r="2.300" /><circle cx="348" cy="1050" r="5.500" /></g>
          <path d="M308 1035Q312 1029 318 1034Q318 1041 324 1045L332 1054L323 1056Q318 1062 310 1056Q303 1049 308 1035Z" fill="#ecca2d" /><path d="M310 1033Q313 1030 317 1034L312 1034Z" fill="#222" /><path d="M317 1045L324 1046L332 1054L321 1052Z" fill="#333242" /><path d="M308 1035L304 1038L309 1039Z" fill="#e2823a" /><path d="M313 1058L310 1064M318 1057L319 1064" stroke="#bd6d36" stroke-width="1.500" />
          <path d="M293 1035L296 1037L300 1035L299 1040L301 1042L297 1043L294 1044L293 1040Z" fill="#d36cef" /><circle cx="340" cy="1035" r="2" fill="#65d5de" /><circle cx="358" cy="1040" r="2" fill="#4dc778" />
        </svg>
      </div>
      <div class="apps">
        <div v-for="(a, i) in apps" :key="i" class="app" :class="{ run: a.run, on: a.on }"><svg width="28" height="28" viewBox="0 0 28 28" v-html="a.g"></svg></div>
      </div>
      <div class="tray">
        <svg width="26" height="40"><circle cx="17" cy="15" r="6" fill="#f6a018" /><path d="M5 26Q0 25 1 20Q2 16 6 17Q8 11 13 14Q18 14 18 19Q22 20 20 25Z" fill="#d5e3f3" /><path d="M8 23L10 27Q9 31 6 28ZM14 23L16 27Q15 31 12 28Z" fill="#2b93e8" /><circle cx="19" cy="28" r="3.700" fill="#d9163c" /></svg>
        <span class="temp">31°C</span><span class="wx">陣雨</span>
        <svg class="tri-icons" width="130" height="40" viewBox="1577 0 130 40" fill="none" stroke="#f4f4f4" stroke-width="1.300">
          <path d="M1588 23L1594 17L1600 23" /><path d="M1613.500 15.500H1620V26H1613.500ZM1620 19L1623 17V25L1620 23M1613 12Q1618 9 1623 12M1613 29.500Q1618 33 1623 29.500" />
          <path d="M1639 15H1650V25H1637V20M1634 13H1639V18H1634ZM1643 25V29M1639 29H1648" /><path d="M1658 18V23H1661L1665 27V14L1661 18ZM1668 18Q1670 20 1668 23M1671 16Q1674 20 1671 25M1673 14Q1678 20 1673 27" />
          <path d="M1690 23Q1686 22 1686 26Q1688 29 1691 25L1697 14Q1700 12 1700 15L1693 25Q1692 28 1695 26L1697 23M1691 18L1697 19M1698 21Q1701 21 1701 18" />
        </svg>
        <span class="ime">英</span>
        <div class="zh">ㄅ</div>
        <div class="clock"><span>下午 02:33</span><span>2022/7/16</span></div>
        <svg class="note" width="20" height="40"><path d="M2 12H17V24H9L6 27V24H2Z" fill="#f2f2f2" /><path d="M5 15H14M5 18H14M5 21H10" stroke="#20261f" /><circle cx="14" cy="23" r="3.500" fill="#20261f" stroke="#eee" /></svg>
      </div>
    </footer>
  </div>
</template>

<style>
body { margin: 0; overflow: hidden; background: #20252a; }
</style>

<style scoped>
.desk { width: 1894px; height: 1067px; overflow: hidden; font-family: "Open Sans", "Noto Sans CJK TC", sans-serif; font-size: 12px; line-height: 16px; color: #eee; display: flex; flex-direction: column; }
.desk svg { display: block; flex: none; }
.desk span, .desk b { white-space: nowrap; }
.defs { position: absolute; }
.upper { display: flex; height: 1020px; flex: none; }
.window { width: 1881px; flex: none; border-right: 1px solid #fff; border-bottom: 1px solid #fff; position: relative; display: flex; flex-direction: column; background: #363636; height: 1019px; }
.behind { flex: 1; display: flex; flex-direction: column; }
.b1 { height: 21px; background: #424855; } .b2 { height: 36px; background: #050c18; } .b3 { height: 36px; background: linear-gradient(#5ba2d8, #286aa9 15%, #24669f 80%, #5cacd9); }
.b4 { flex: 1; background: linear-gradient(90deg, #d6d6d6, #f2f2f2); }
.strip { height: 7px; flex: none; background: linear-gradient(#ccc, #e2e2e2); } .strip div { width: 194px; height: 7px; background: #2b5b8d; }

.titlebar { height: 21px; flex: none; display: flex; background: #fff; overflow: hidden; }
.qat { margin-left: 23px; width: 214px; flex: none; background: linear-gradient(#8e8e8e, #5d5d5d); }
.caption { width: 1035px; flex: none; color: #111; display: flex; gap: 18px; padding-left: 405px; box-sizing: border-box; font-size: 12.500px; margin-top: -3px; }
.caption span:first-child { width: 140px; }
.info { width: 447px; flex: none; display: flex; background: linear-gradient(#858585, #585858); overflow: hidden; }
.ask { width: 180px; height: 20px; box-sizing: border-box; border: 1px solid #333; border-top: 0; background: #6c6c6c; color: #bbb; font-style: italic; padding-left: 3px; font-size: 11px; line-height: 16px; flex: none; }
.login { width: 26px; flex: none; color: #fff; line-height: 19px; }
.appmenu { position: absolute; left: 0; top: 0; width: 22px; height: 37px; border-right: 1px solid #111; border-bottom: 1px solid #111; background: linear-gradient(#ddd, #888); z-index: 2; }

.menutabs { height: 21px; flex: none; box-sizing: border-box; background: #535353; border-top: 1px solid #333; border-bottom: 1px solid #2a2a2a; padding-left: 28px; display: flex; }
.menutabs span { text-align: center; color: #ccc; line-height: 20px; flex: none; }
.menutabs span.on { color: #fff; background: linear-gradient(#777, #5c5c5c); height: 18px; line-height: 15px; margin-top: 2px; box-sizing: border-box; border: 1px solid #2a2a2a; border-bottom: 0; }

.ribbon { height: 99px; flex: none; box-sizing: border-box; display: flex; background: linear-gradient(#4d4d4d, #373737); border-bottom: 1px solid #888; }
.panel { height: 97px; box-sizing: border-box; border-right: 1px solid #3c3c3c; background: #5b5b5b; border-bottom: 1px solid #6a6a6a; flex: none; display: flex; flex-direction: column; justify-content: space-between; overflow: hidden; box-shadow: inset 1px 0 #686868; }
.panel:first-child .tool:first-child { margin-left: -12px; }
.tools { display: flex; }
.tool { flex: none; display: flex; flex-direction: column; align-items: center; padding-top: 7px; }
.lbl { line-height: 15px; margin-top: 4px; text-align: center; }
.tri { width: 0; height: 0; border: 2.500px solid transparent; border-top: 3px solid #eee; border-bottom: 0; margin-top: 2px; }
.tri.big { border-width: 4px; border-top-width: 4px; border-bottom: 0; display: inline-block; margin: 0 0 2px 7px; }
.ptitle { height: 18px; background: linear-gradient(#484848, #555); text-align: center; line-height: 19px; position: relative; }
.ltitle { margin-left: 2px; }
.launch { position: absolute; right: 3px; top: 7px; }
.layer { width: 243px; }
.layer .tools { padding-left: 5px; }
.two { width: 32px; }
.combos { margin: 5px 0 0 4px; display: flex; flex-direction: column; gap: 2px; }
.combo { width: 200px; height: 22px; box-sizing: border-box; border: 1px solid #333; background: linear-gradient(#535353, #6c6c6c); display: flex; align-items: center; }
.combo .tri.big { margin: 0 2px 0 auto; }
.combo .zero { padding-left: 1px; }

.doctabs { height: 29px; flex: none; box-sizing: border-box; background: #363636; border-bottom: 4px solid #5b5b5b; display: flex; padding: 3px 0 0; }
.doctab { width: 123px; position: relative; height: 22px; flex: none; color: #aaa; }
.doctab.on { color: #fff; z-index: 1; }
.doctab .shape { position: absolute; left: 0; top: 0; }
.doctab span { position: absolute; left: 14px; top: 4px; font-size: 12.500px; }
.doctab .x { position: absolute; right: 8px; top: 7px; }
.plus { margin: 4px 0 0 11px; }

.canvas { height: 819px; flex: none; position: relative; background: #212830; overflow: hidden; }
.compass text { font-size: 19px; fill: #a9abaf; font-family: "Noto Sans CJK TC", sans-serif; font-weight: 500; }
.compass text.top { font-size: 29px; fill: #555a60; font-weight: 300; }
.vplabel { position: absolute; left: -2px; top: 6px; color: #ddd; font-size: 12.200px; }
.cmd { position: absolute; left: 362px; top: 735px; width: 1139px; }
.hist { display: flex; flex-direction: column; gap: 5px; padding-left: 60px; margin-bottom: 3px; align-items: flex-start; }
.hist span { background: #515356; width: 37px; height: 15px; line-height: 14px; font-size: 13px; border-radius: 2px; color: #aaa; text-align: center; letter-spacing: .5px; }
.hist span:nth-child(2) { color: #c6c6c6; background: #595b5d; } .hist span:nth-child(3) { color: #eee; background: #626365; }
.bar { height: 26px; display: flex; background: linear-gradient(#777, #444 30%, #404040); border-radius: 3px 0 0 3px; }
.entry { flex: 1; background: #bbbcbf; display: flex; align-items: center; border-top: 1px solid #999; box-sizing: border-box; }
.entry span { font-style: italic; color: #6f6f73; font-size: 13px; margin-top: -3px; }
.up { margin-left: auto; }

.status { height: 29px; flex: none; background: #363636; border-top: 1px solid #5f5f5f; box-sizing: border-box; display: flex; justify-content: space-between; }
.layouts { position: relative; }
.names { position: absolute; left: 5px; top: 1px; display: flex; color: #aaa; }
.names b { width: 47px; color: #fff; font-weight: 500; } .names span { width: 54px; }
.groups { display: flex; align-items: center; margin-right: -1px; }
.grp { height: 27px; box-sizing: border-box; box-shadow: inset 0 0 0 1px #777; background: #494949; flex: none; overflow: hidden; }

.taskbar { height: 40px; flex: none; background: linear-gradient(90deg, #1a1e29 0, #1c212c 45%, #1e2626 65%, #22281f 85%, #20241f); display: flex; align-items: stretch; }
.search { width: 343px; height: 40px; background: #f1f1f1; display: flex; align-items: center; flex: none; color: #222; font-size: 15.900px; border-top: 1px solid #bbb; box-sizing: border-box; }
.search span { margin-top: -2px; } .bird { margin-left: auto; }
.apps { display: flex; margin-left: 4px; }
.app { width: 47px; margin-right: 1.950px; height: 40px; display: flex; justify-content: center; align-items: center; box-sizing: border-box; position: relative; flex: none; }
.app.run::after { content: ""; position: absolute; left: 4px; right: 4px; bottom: 0; height: 2px; background: #76b9ed; }
.app.on { background: #41464f; } .app.on::after { left: 0; right: 0; }
.tray { margin-left: auto; display: flex; align-items: center; color: #f3f3f3; font-size: 14.500px; }
.temp { width: 41px; margin-left: 4px; font-size: 15px; letter-spacing: -.6px; } .wx { width: 34px; }
.ime { width: 28px; margin-left: 7px; font-size: 15px; }
.zh { width: 15px; height: 15px; background: #fff; color: #111; font-size: 13px; line-height: 14px; text-align: center; font-weight: bold; }
.clock { width: 68px; margin: 0 12px 0 13px; display: flex; flex-direction: column; align-items: center; font-size: 12.500px; line-height: 18px; letter-spacing: -.2px; }
.note { margin-right: 23px; }
</style>
